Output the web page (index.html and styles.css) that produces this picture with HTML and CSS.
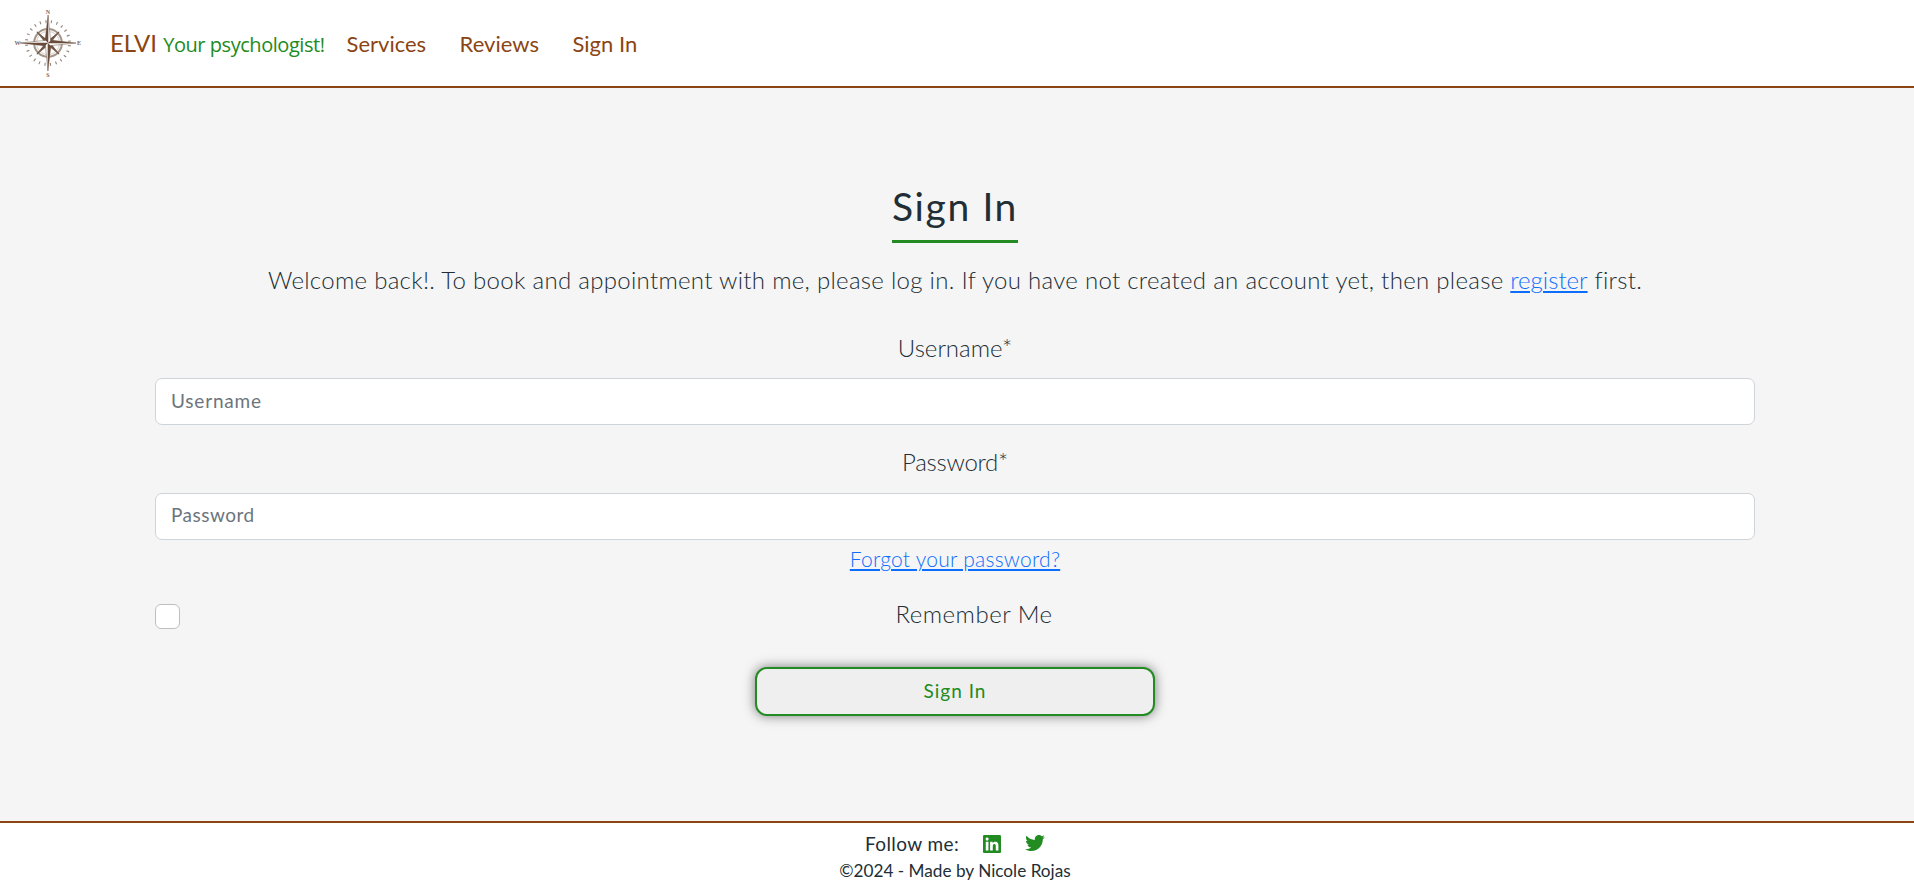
FILE: index.html
```
<!DOCTYPE html>
<html lang="en">
<head>
<meta charset="utf-8">
<title>ELVI - Sign In</title>
<link rel="stylesheet" href="styles.css">
</head>
<body>
<header class="header">
  <svg class="logo" viewBox="-38 -38 76 76" aria-hidden="true">
    <g fill="none" stroke="#a3958b">
      <circle r="13.9" stroke-width="2"/>
      <circle r="11.6" stroke-width=".5"/>
      <circle r="21.5" stroke="#7d6859" stroke-width="3" stroke-dasharray="1.1 4.529" stroke-dashoffset="-2.3" opacity=".8"/>
    </g>
    <g fill="#715747">
      <path d="M0-16.5 2-2 0 0-2-2Z" transform="rotate(45)"/>
      <path d="M0-16.5 2-2 0 0-2-2Z" transform="rotate(135)"/>
      <path d="M0-16.5 2-2 0 0-2-2Z" transform="rotate(225)"/>
      <path d="M0-16.5 2-2 0 0-2-2Z" transform="rotate(315)"/>
    </g>
    <g stroke="#715747" stroke-width="1.1">
      <path d="M11-11-11 11M-11-11 11 11"/>
    </g>
    <g fill="#fff" stroke="#715747" stroke-width=".5">
      <path d="M0-28 2.6-2.6 28 0 2.6 2.6 0 28-2.6 2.6-28 0-2.6-2.6Z"/>
    </g>
    <g fill="#684b3a">
      <path d="M.3-29V0L-3-3ZM29 .3H0L3-3ZM-.3 29V0L3 3ZM-29-.3H0L-3 3Z"/>
    </g>
    <g class="logo-letters">
      <text x="0" y="-28.800">N</text><text x="0" y="34">S</text>
      <text x="-30.500" y="2">W</text><text x="31" y="2">E</text>
    </g>
  </svg>
  <nav class="nav">
    <a class="brand">ELVI <span class="tagline">Your psychologist!</span></a>
    <a class="nav-link">Services</a>
    <a class="nav-link">Reviews</a>
    <a class="nav-link">Sign In</a>
  </nav>
</header>
<main class="main">
  <h1 class="title">Sign In</h1>
  <p class="intro">Welcome back!. To book and appointment with me, please log in. If you have not created an account yet, then please <a class="link register" href="#">register</a> first.</p>
  <form class="form">
    <label class="label" for="user">Username*</label>
    <input class="input" id="user" type="text" placeholder="Username">
    <label class="label label-password" for="pass">Password*</label>
    <input class="input input-password" id="pass" type="password" placeholder="Password">
    <a class="link forgot" href="#">Forgot your password?</a>
    <div class="remember">
      <input class="checkbox" id="remember" type="checkbox">
      <label class="remember-label" for="remember">Remember Me</label>
    </div>
    <button class="button" type="button">Sign In</button>
  </form>
</main>
<footer class="footer">
  <div class="follow">
    <span>Follow me:</span>
    <svg class="linkedin" viewBox="0 32 448 448" aria-label="LinkedIn"><path d="M416 32H31.9C14.3 32 0 46.500 0 64.300v383.400C0 465.500 14.300 480 31.900 480H416c17.600 0 32-14.500 32-32.300V64.300c0-17.800-14.400-32.300-32-32.300zM135.400 416H69V202.200h66.500V416zm-33.200-243c-21.300 0-38.500-17.300-38.500-38.500S80.900 96 102.200 96c21.200 0 38.500 17.300 38.500 38.500 0 21.300-17.200 38.500-38.500 38.500zm282.100 243h-66.400V312c0-24.800-.5-56.700-34.500-56.700-34.600 0-39.900 27-39.900 54.900V416h-66.400V202.200h63.700v29.200h.9c8.900-16.800 30.600-34.500 62.900-34.500 67.200 0 79.700 44.300 79.700 101.900V416z"/></svg>
    <svg class="twitter" viewBox="0 48 512 416" aria-label="Twitter"><path d="M459.370 151.716c.325 4.548.325 9.097.325 13.645 0 138.720-105.583 298.558-298.558 298.558-59.452 0-114.680-17.219-161.137-47.106 8.447.974 16.568 1.299 25.340 1.299 49.055 0 94.213-16.568 130.274-44.832-46.132-.975-84.792-31.188-98.112-72.772 6.498.974 12.995 1.624 19.818 1.624 9.421 0 18.843-1.300 27.614-3.573-48.081-9.747-84.143-51.980-84.143-102.985v-1.299c13.969 7.797 30.214 12.670 47.431 13.319-28.264-18.843-46.781-51.005-46.781-87.391 0-19.492 5.197-37.360 14.294-52.954 51.655 63.675 129.300 105.258 216.365 109.807-1.624-7.797-2.599-15.918-2.599-24.040 0-57.828 46.782-104.934 104.934-104.934 30.213 0 57.502 12.670 76.670 33.137 23.715-4.548 46.456-13.320 66.599-25.340-7.798 24.366-24.366 44.833-46.132 57.827 21.117-2.273 41.584-8.122 60.426-16.243-14.292 20.791-32.161 39.308-52.628 54.253z"/></svg>
  </div>
  <div class="copyright">©2024 - Made by Nicole Rojas</div>
</footer>
</body>
</html>
```
FILE: styles.css
```
* { box-sizing: border-box; }
body {
  margin: 0;
  height: 889px;
  display: flex;
  flex-direction: column;
  overflow: hidden;
  background: #fff;
  color: #212e36;
  font-family: Lato, sans-serif;
}
.header {
  height: 88px;
  border-bottom: 2px solid #8b4513;
  display: flex;
  align-items: center;
  padding-left: 10px;
}
.logo { width: 76px; height: 76px; }
.logo-letters {
  font: 700 6px "Liberation Serif", serif;
  fill: #7d6859;
  text-anchor: middle;
}
.nav {
  display: flex;
  align-items: baseline;
  margin-left: 24px;
  color: #8b4513;
}
.brand { font-size: 24px; margin-right: 22px; white-space: nowrap; }
.tagline {
  font-family: "Open Sans", sans-serif;
  font-size: 20px;
  letter-spacing: -.45px;
  color: #228b22;
}
.nav-link { font-size: 22px; margin-right: 33.5px; }
.main {
  height: 733px;
  background: #f5f5f5;
  display: flex;
  flex-direction: column;
  align-items: center;
  padding: 95px 4px 0 0;
}
.title {
  margin: 0;
  padding-bottom: 11px;
  border-bottom: 3px solid #228b22;
  font-size: 39px;
  font-weight: 400;
  line-height: 46px;
  letter-spacing: 1.6px;
}
.intro {
  margin: 22px 0 0;
  font-size: 24px;
  font-weight: 300;
  line-height: 30px;
  letter-spacing: .3px;
  white-space: nowrap;
}
.link {
  color: #0d6efd;
  text-decoration: underline;
  text-decoration-thickness: 2px;
  text-underline-offset: 2px;
}
.register { letter-spacing: 0; }
.form {
  width: 1600px;
  display: flex;
  flex-direction: column;
  align-items: center;
  margin-top: 38px;
}
.label {
  font-size: 24px;
  font-weight: 300;
  line-height: 30px;
}
.label-password { margin-top: 22px; letter-spacing: -.25px; }
.input {
  width: 100%;
  height: 47px;
  margin: 15px 0 0;
  padding: 0 15px 2px;
  border: 1px solid #ced4da;
  border-radius: 7px;
  background: #fff;
  font: 400 19px Lato, sans-serif;
  letter-spacing: .8px;
}
.input-password { margin-top: 16px; padding-bottom: 5px; letter-spacing: .5px; }
.input::placeholder { color: #6c757d; opacity: 1; }
.forgot {
  margin-top: 6px;
  font-size: 21px;
  font-weight: 300;
  line-height: 26px;
  letter-spacing: .25px;
}
.remember {
  width: 100%;
  display: flex;
  align-items: flex-start;
  margin-top: 27px;
}
.checkbox {
  appearance: none;
  width: 25px;
  height: 25px;
  margin: 5px 13px 0 0;
  border: 1px solid #bfbfbf;
  border-radius: 6px;
  background: #fff;
}
.remember-label {
  flex: 1;
  text-align: center;
  font-size: 24px;
  font-weight: 300;
  line-height: 30px;
  letter-spacing: .5px;
}
.button {
  width: 400px;
  height: 49px;
  margin-top: 38px;
  padding: 0 0 2px;
  border: 2px solid #228b22;
  border-radius: 12px;
  background: #efefef;
  box-shadow: 0 0 12px rgba(0, 0, 0, .5);
  color: #228b22;
  font: 400 19px Lato, sans-serif;
  letter-spacing: 1px;
}
.footer {
  height: 68px;
  border-top: 2px solid #8b4513;
  padding: 9px 4px 0 0;
  display: flex;
  flex-direction: column;
  align-items: center;
}
.follow {
  display: flex;
  font-size: 19px;
  line-height: 24px;
  letter-spacing: .4px;
}
.linkedin, .twitter { fill: #228b22; }
.linkedin { width: 18px; height: 18px; margin: 3px 0 0 24px; }
.twitter { width: 20px; height: 16px; margin: 3px 0 0 24px; }
.copyright {
  margin-top: 3px;
  font-size: 17.2px;
  line-height: 24px;
}
```
